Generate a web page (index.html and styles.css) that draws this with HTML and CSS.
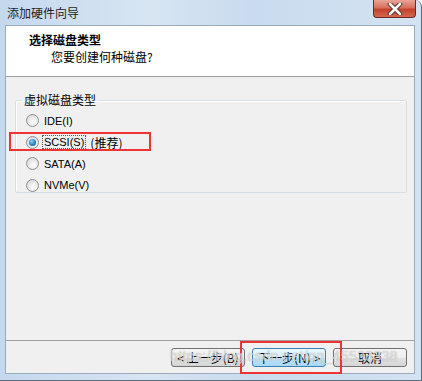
FILE: index.html
```html
<!DOCTYPE html>
<html lang="zh-CN">
<head>
    <meta charset="UTF-8">
    <title>添加硬件向导</title>
    <link rel="stylesheet" href="styles.css">
</head>
<body>

<div class="window">
    <div class="titlebar">
        <span class="title">添加硬件向导</span>
        <button class="close-btn">
            <svg width="16" height="12" viewBox="0 0 16 12">
                <path d="M3 1 L13 11 M13 1 L3 11" stroke="#4a2a24" stroke-width="4.5" stroke-linecap="round"/>
                <path d="M3 1 L13 11 M13 1 L3 11" stroke="#fff" stroke-width="2.6" stroke-linecap="round"/>
            </svg>
        </button>
    </div>

    <div class="client">
        <div class="header">
            <h1>选择磁盘类型</h1>
            <p>您要创建何种磁盘?</p>
        </div>

        <div class="content">
            <fieldset class="group">
                <legend>虚拟磁盘类型</legend>
                <label class="radio"><span class="dot"></span><span class="lat">IDE(I)</span></label>
                <label class="radio checked"><span class="dot"></span><span class="lat focus">SCSI(S)</span><span class="note">(推荐)</span></label>
                <label class="radio"><span class="dot"></span><span class="lat">SATA(A)</span></label>
                <label class="radio"><span class="dot"></span><span class="lat">NVMe(V)</span></label>
                <div class="mark mark-scsi"></div>
            </fieldset>
        </div>

        <div class="footer">
            <button class="btn">&lt; 上一步(B)</button>
            <button class="btn default">下一步(N) &gt;</button>
            <button class="btn">取消</button>
            <div class="mark mark-next"></div>
            <span class="watermark">https://blog.csdn.net/qq_45533338</span>
        </div>
    </div>
</div>

</body>
</html>
```

FILE: styles.css
```css
body {
    margin: 0;
    width: 422px;
    height: 381px;
    overflow: hidden;
    font-family: "Noto Sans CJK SC", sans-serif;
    font-size: 12px;
    color: #000;
}
.window {
    height: 381px;
    box-sizing: border-box;
    display: flex;
    flex-direction: column;
    background: linear-gradient(90deg, #c4d8ee 0%, #d7e5f3 35%, #c9dbee 60%, #d3e3f3 100%);
    border-right: 1px solid #5a6b7c;
    border-bottom: 1px solid #5a6b7c;
    border-top-right-radius: 7px;
}
.titlebar {
    height: 25px;
    display: flex;
    align-items: flex-start;
    justify-content: space-between;
}
.title {
    padding: 5px 0 0 7px;
    font-size: 12px;
    line-height: 16px;
    color: #1e1e1e;
}
.close-btn {
    width: 43px;
    height: 18px;
    margin-right: 5px;
    padding: 0;
    border: 1px solid #6e2a20;
    border-top: none;
    border-radius: 0 0 4px 4px;
    background: linear-gradient(#e9a496 0%, #d7705c 45%, #c2432c 55%, #d5684f 100%);
    display: flex;
    align-items: center;
    justify-content: center;
}
.client {
    flex: 1;
    margin: 0 6px 6px 5px;
    border: 1px solid #9aabbd;
    background: #f0f0f0;
    display: flex;
    flex-direction: column;
}
.header {
    height: 50px;
    background: #fff;
    border-bottom: 1px solid #a0a0a0;
    box-sizing: content-box;
}
.header h1 {
    margin: 6px 0 0 23px;
    font-size: 12px;
    line-height: 16px;
    font-weight: bold;
}
.header p {
    margin: 1px 0 0 45px;
    line-height: 16px;
}
.content {
    flex: 1;
    padding: 16px 7px 0 9px;
}
.group {
    position: relative;
    margin: 0;
    height: 95px;
    padding: 3px 0 0 10px;
    border: 1px solid #d5dfe5;
    box-shadow: inset 1px 1px 0 #fff;
    border-radius: 2px;
}
.group legend {
    margin-left: -4px;
    padding: 0 2px;
    line-height: 14px;
}
.radio {
    display: flex;
    align-items: center;
    height: 21.5px;
}
.dot {
    width: 11px;
    height: 11px;
    border-radius: 50%;
    border: 1px solid #8e8f8f;
    background: radial-gradient(circle at 60% 65%, #fff 0%, #e8e8e8 50%, #cfcfcf 100%);
    margin-right: 4px;
    position: relative;
}
.checked .dot::after {
    content: "";
    position: absolute;
    left: 2px;
    top: 2px;
    width: 7px;
    height: 7px;
    border-radius: 50%;
    background: radial-gradient(circle at 40% 35%, #8fd4f5 0%, #2a86c8 50%, #0f4a82 100%);
}
.lat {
    font-family: "Liberation Sans", Arial, sans-serif;
    font-size: 11px;
    line-height: 12px;
    padding: 0 1px;
}
.focus {
    outline: 1px dotted #555;
}
.note {
    margin-left: 5px;
}
.footer {
    position: relative;
    border-top: 1px solid #a0a0a0;
    display: flex;
    justify-content: flex-end;
    align-items: flex-start;
    gap: 7px;
    padding: 7px 7px 0 0;
    box-sizing: border-box;
    height: 33px;
}
.btn {
    width: 74px;
    height: 19px;
    padding: 0;
    font-family: "Noto Sans CJK SC", sans-serif;
    font-size: 12px;
    line-height: 15px;
    color: #000;
    border: 1px solid #707070;
    border-radius: 3px;
    background: linear-gradient(#f4f4f4 0%, #eeeeee 50%, #e2e2e2 51%, #d6d6d6 100%);
}
.btn.default {
    border-color: #3c7fb1;
    background: linear-gradient(#eaf6fd 0%, #d9f0fc 50%, #bee6fd 51%, #a7d9f5 100%);
}
.mark {
    position: absolute;
    border: 2px solid #ee3333;
    pointer-events: none;
}
.mark-scsi {
    left: -7px;
    top: 25px;
    width: 138px;
    height: 15px;
}
.mark-next {
    left: 234px;
    top: 0;
    width: 98px;
    height: 29px;
}
.watermark {
    position: absolute;
    left: 164px;
    top: 7px;
    font-family: "Liberation Sans", Arial, sans-serif;
    font-size: 14px;
    letter-spacing: 0.4px;
    color: rgba(255, 255, 255, 0.6);
    text-shadow: 0 0 1px rgba(120, 120, 120, 0.7);
    pointer-events: none;
}
```
